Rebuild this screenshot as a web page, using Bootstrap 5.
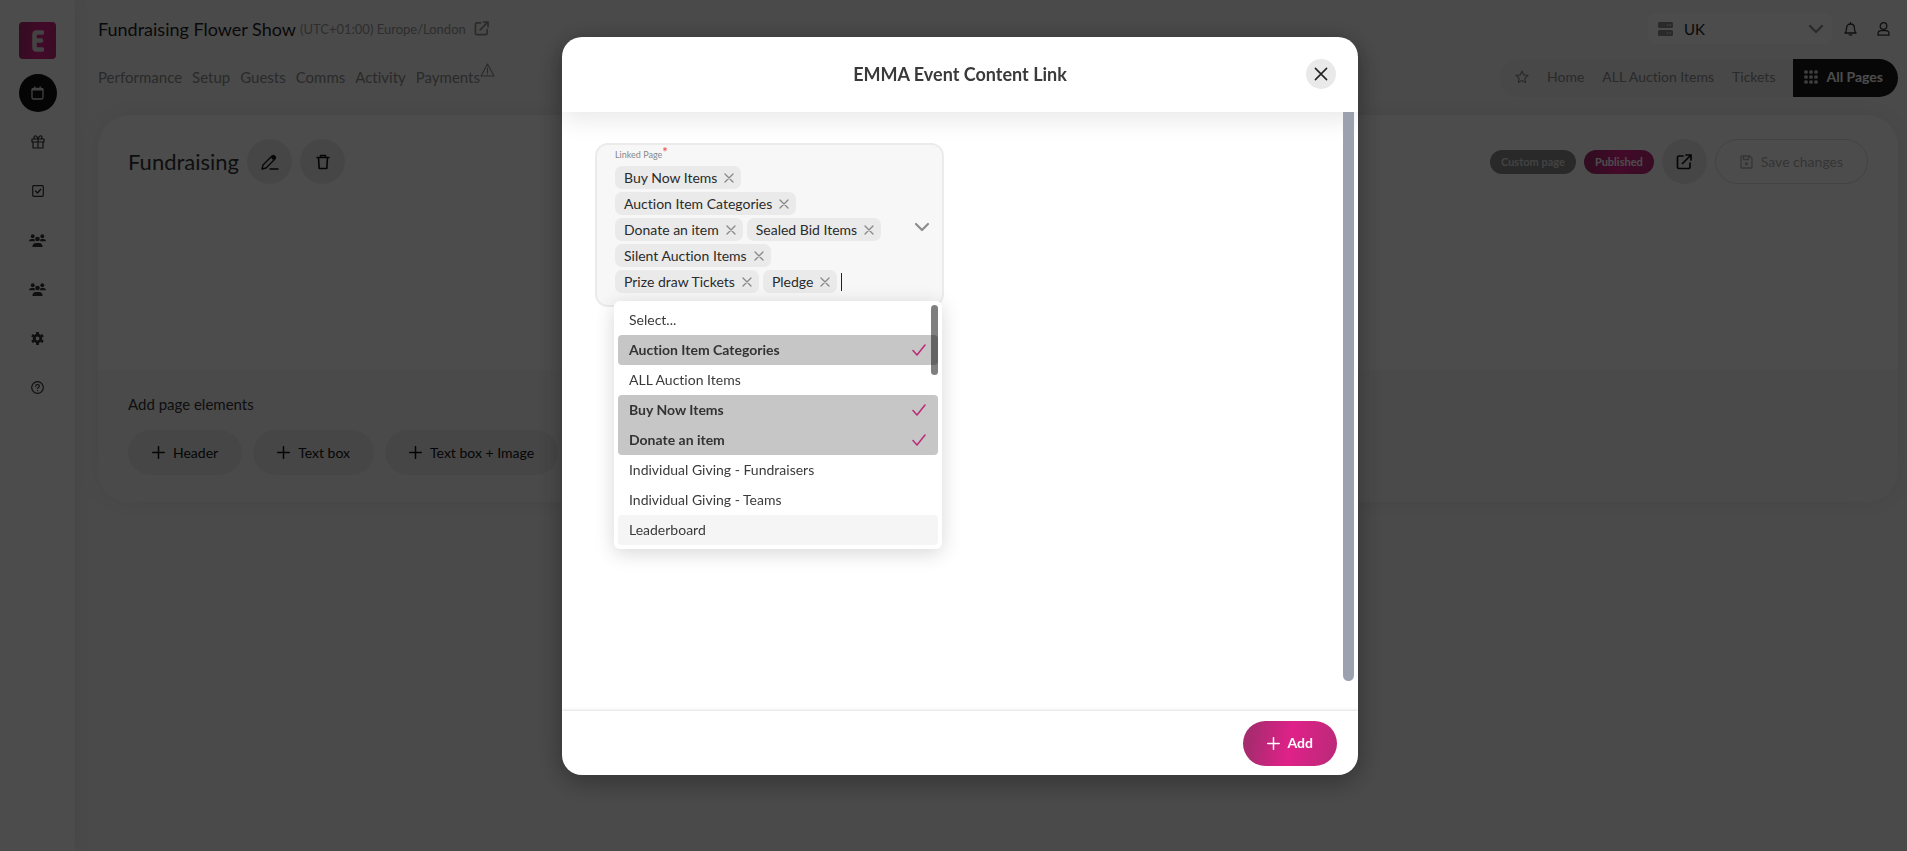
<!DOCTYPE html>
<html lang="en">
<head>
<meta charset="utf-8">
<meta name="viewport" content="width=device-width, initial-scale=1">
<title>Fundraising Flower Show</title>
<link href="https://cdn.jsdelivr.net/npm/bootstrap@5.3.0/dist/css/bootstrap.min.css" rel="stylesheet">
<style>
  body { font-family: Lato, "Liberation Sans", sans-serif; font-size: 15px; line-height: 20px; color: #333; background: #f8f8f8; overflow: hidden; font-variant-ligatures: none; }
  svg { display: block; fill: none; stroke: currentColor; stroke-linecap: round; stroke-linejoin: round; flex: none; }
  .solid { fill: currentColor; stroke: none; }
  a { color: inherit; text-decoration: none; }

  .side-rail { width: 75px; padding-top: 22px; gap: 11px; background: #fff; box-shadow: 4px 0 16px rgba(0,0,0,.06); }
  .brand-tile { width: 37px; height: 37px; border-radius: 4px; margin-bottom: 4px; background: linear-gradient(100deg, #a82b6f, #df2189 60%, #b92a78); color: #e2e2e2; }
  .rail-link { width: 38px; height: 38px; border-radius: 50%; }
  .rail-link.active { background: #111; color: #ddd; }
  .rail-version { font-size: 12px; color: #555; margin-bottom: -14px; }

  .workspace { padding: 13px 9px 0 23px; }
  .top-line { height: 31px; margin-bottom: 15px; }
  .event-name { font-size: 18px; color: #222; }
  .zone { font-size: 13px; color: #999; }
  .muted { color: #8c8c8c; }
  .region-box { width: 184px; height: 31px; border-radius: 8px; background: #fdfdfd; padding: 0 8px 0 10px; }
  .region-box select { appearance: none; border: 0; background: none; font-size: 15px; color: #222; width: 100%; padding: 0 0 0 11px; }
  .event-tabs { gap: 10px; padding-bottom: 2px; }
  .event-tabs sup { margin-top: -4px; }
  .page-tabs { height: 38px; border-radius: 19px; overflow: hidden; background: #f1f1f1; font-size: 14px; }
  .tab-list { padding: 0 18px 2px 15px; gap: 18px; }
  .all-pages { background: #1a1a1a; color: #fff; padding: 0 15px 2px 11px; gap: 8px; font-weight: 700; }

  .page-card { border-radius: 32px; background: #fff; margin-top: 18px; overflow: hidden; box-shadow: 0 0 24px rgba(0,0,0,.08); }
  .card-top { min-height: 255px; padding: 24px 30px 0 30px; }
  .card-bottom { background: #f9f9f9; min-height: 132px; padding: 24px 30px; }
  .page-name { font-size: 22px; line-height: 28px; }
  .pill-btn { height: 45px; border: 0; border-radius: 23px; background: #ebebeb; color: #111; font-size: 14px; }
  .round-btn { width: 45px; }
  .save-btn { border: 1px solid #ddd; background: #fff; color: #b0b0b0; padding: 0 24px; gap: 8px; }
  .tag-pill { border-radius: 13px; font-size: 11px; font-weight: 700; line-height: 24px; padding: 0 11px; color: #ddd; background: #8a8a8a; }
  .brand-fill { background: linear-gradient(100deg, #a82b6f 10%, #df2189 50%, #b92a78); color: #fff; }
  .add-btn { padding: 0 24px; gap: 8px; }

  .modal-backdrop.show { opacity: .7; }
  .link-modal { padding-left: 13px; }
  .link-dialog { max-width: 796px; margin: 37px auto 0; }
  .link-dialog .modal-content { height: calc(100vh - 113px); border: 0; border-radius: 20px; box-shadow: 0 6px 28px rgba(0,0,0,.35); }
  .link-dialog .modal-header { height: 75px; border: 0; padding: 0 22px 2px; box-shadow: 0 8px 24px rgba(0,0,0,.09); display: grid; grid-template-columns: 30px 1fr 30px; }
  .link-dialog .modal-title { font-size: 18px; font-weight: 700; line-height: 24px; color: #3a3a3a; }
  .close-btn { width: 30px; height: 30px; border: 0; border-radius: 50%; background: #e9e9e9; color: #222; }
  .link-dialog .modal-body { padding: 31px 4px 0 33px; position: static; font-size: 14px; }
  .bar-track { width: 11px; margin-top: -31px; }
  .bar-thumb { height: 95%; border-radius: 0 0 6px 6px; background: #9ba1ae; }
  .link-dialog .modal-footer { height: 64px; border: 0; padding: 0 21px; box-shadow: 0 -1px 3px rgba(0,0,0,.12); }
  .link-dialog .modal-footer > * { margin: 0; }

  .pick-box { width: 349px; height: 164px; border: 2px solid #ebebeb; border-radius: 13px; background: #f7f7f7; padding: 3px 12px 0 18px; position: relative; }
  .pick-label { display: block; height: 18px; font-size: 9px; line-height: 14px; color: #888; }
  .pick-label sup { font-size: 13px; line-height: 0; top: -1px; color: #f0433a; }
  .chips { width: 276px; gap: 3px 4px; }
  .chip-item { height: 23px; border-radius: 7px; background: #eaeaea; padding: 0 7px 0 9px; gap: 7px; color: #2b2b2b; }
  .chip-item button { border: 0; padding: 0; background: none; color: #888; }
  .chips input { width: 20px; height: 18px; border: 0; border-left: 1px solid #222; background: none; padding: 0; outline: 0; }
  .pick-menu { position: absolute; top: 156px; left: 17px; width: 328px; padding: 4px; border-radius: 6px; background: #fff; box-shadow: 0 4px 20px rgba(0,0,0,.16); z-index: 5; color: #3a3a3a; }
  .pick-option { height: 30px; padding: 0 12px 0 11px; border-radius: 4px; }
  .pick-option.chosen { background: #c6c6c6; font-weight: 700; color: #333; }
  .pick-option.chosen svg { color: #b92a78; }
  .pick-option.hovered { background: #f5f5f5; }
  .pick-option.joined-top { border-radius: 4px 4px 0 0; }
  .pick-option.joined-end { border-radius: 0 0 4px 4px; }
  .menu-thumb { position: absolute; top: 4px; right: 4px; width: 7px; height: 70px; border-radius: 4px; background: rgba(0,0,0,.5); }
</style>
</head>
<body>
<svg width="0" height="0" class="position-absolute" aria-hidden="true">
  <defs>
    <symbol id="plus" viewBox="0 0 13 13"><path d="M6.500 .7v11.600M.7 6.500h11.600" stroke-width="1.500"/></symbol>
    <symbol id="cross" viewBox="0 0 10 10"><path d="M1 1l8 8M9 1l-8 8"/></symbol>
    <symbol id="down" viewBox="0 0 16 10"><path d="M2 2l6 6 6-6" stroke-width="2.200"/></symbol>
    <symbol id="tick" viewBox="0 0 14 12"><path d="M1 6.500l4 4.500 8-10" stroke-width="1.500"/></symbol>
    <symbol id="outside" viewBox="0 0 16 16"><path d="M7 2H3a1.500 1.500 0 0 0-1.500 1.500v9.500A1.500 1.500 0 0 0 3 14.500h9.500A1.500 1.500 0 0 0 14 13V9M10 1h5v5M15 1L6.500 9.500" stroke-width="1.700"/></symbol>
    <symbol id="people" viewBox="0 0 16 12"><circle cx="3.500" cy="2" r="1.800"/><circle cx="12.500" cy="2" r="1.800"/><circle cx="8" cy="4.600" r="2.200"/><path d="M0 6.800c0-1.500 1-2.300 2.600-2.300h1.600c.5 0 .8.1 1 .2-.1 1 .2 1.700.6 2.100zM16 6.800c0-1.500-1-2.300-2.600-2.300h-1.600c-.5 0-.8.1-1 .2.1 1-.2 1.700-.6 2.100zM3.200 12c0-2.400 1.300-3.700 3.300-3.700h3c2 0 3.300 1.300 3.300 3.700z"/></symbol>
  </defs>
</svg>

<div class="d-flex vh-100">
  <nav class="side-rail d-flex flex-column align-items-center flex-shrink-0" aria-label="Main">
    <a href="#" class="brand-tile d-flex align-items-center justify-content-center" aria-label="EMMA"><svg width="12" height="22" viewBox="0 0 12 22"><path d="M10 2.500H4.500q-2 0-2 2v13q0 2 2 2H10M3 10.500h6" stroke-width="4.500"/></svg></a>
    <a href="#" class="rail-link active d-flex align-items-center justify-content-center" aria-label="Events"><svg width="13" height="14" viewBox="0 0 13 14" stroke-width="1.300"><rect x="1" y="2.500" width="11" height="10.500" rx="1.500"/><path d="M1.500 3.500h10" stroke-width="2"/><path d="M3.800.8v2M9.200.8v2"/></svg></a>
    <a href="#" class="rail-link d-flex align-items-center justify-content-center" aria-label="Gifts"><svg width="14" height="14" viewBox="0 0 14 14" stroke-width="1.200"><path d="M1 4h12v3H1zM2 7v6h10V7M7 4v9M7 4C6 0 3 0 3 2.400 3 3.600 4 4 5 4M7 4c1-4 4-4 4-1.600C11 3.600 10 4 9 4"/></svg></a>
    <a href="#" class="rail-link d-flex align-items-center justify-content-center" aria-label="Tasks"><svg width="12" height="12" viewBox="0 0 12 12" stroke-width="1.200"><rect x=".7" y=".7" width="10.600" height="10.600" rx="1"/><path d="M3.500 6l2 2 3.200-3.700" stroke-width="1.400"/></svg></a>
    <a href="#" class="rail-link d-flex align-items-center justify-content-center" aria-label="Guests"><svg class="solid" width="17" height="13"><use href="#people"/></svg></a>
    <a href="#" class="rail-link d-flex align-items-center justify-content-center" aria-label="Teams"><svg class="solid" width="17" height="13"><use href="#people"/></svg></a>
    <a href="#" class="rail-link d-flex align-items-center justify-content-center" aria-label="Settings"><svg width="13" height="13" viewBox="0 0 13 13"><circle cx="6.500" cy="6.500" r="3.300" stroke-width="2.800"/><path d="M6.500 0v2.200M6.500 10.800V13M.9 3.200l1.900 1.100M10.200 8.700l1.900 1.100M.9 9.800l1.900-1.100M10.200 4.300l1.900-1.100" stroke-width="2.800" stroke-linecap="butt"/></svg></a>
    <a href="#" class="rail-link d-flex align-items-center justify-content-center" aria-label="Help"><svg width="13" height="13" viewBox="0 0 13 13" stroke-width="1.200"><circle cx="6.500" cy="6.500" r="5.800"/><path d="M4.700 5.200c0-2.300 3.700-2.200 3.700-.1 0 1.300-1.800 1.300-1.800 2.300M6.600 9.500v.1"/></svg></a>
    <span class="rail-version mt-auto">3.2.7</span>
  </nav>

  <main class="workspace flex-grow-1">
    <div class="top-line d-flex align-items-center justify-content-between">
      <div class="d-flex align-items-center">
        <span class="event-name">Fundraising Flower Show</span>
        <span class="zone ms-1">(UTC+01:00) Europe/London</span>
        <a href="#" class="muted ms-2" aria-label="Open event"><svg width="15" height="15"><use href="#outside"/></svg></a>
      </div>
      <div class="d-flex align-items-center">
        <label class="region-box d-flex align-items-center">
          <svg class="solid muted" width="15" height="14" viewBox="0 0 15 14"><path d="M1.500 0h12A1.500 1.500 0 0 1 15 1.500v3A1.500 1.500 0 0 1 13.500 6h-12A1.500 1.500 0 0 1 0 4.500v-3A1.500 1.500 0 0 1 1.500 0zM1.500 8h12A1.500 1.500 0 0 1 15 9.500v3a1.500 1.500 0 0 1-1.500 1.500h-12A1.500 1.500 0 0 1 0 12.500v-3A1.500 1.500 0 0 1 1.500 8z"/><path d="M9 2.500h1.500v1H9zM11.500 2.500H13v1h-1.500zM9 10.500h1.500v1H9zM11.500 10.500H13v1h-1.500z" fill="#fff"/></svg>
          <select aria-label="Region"><option>UK</option></select>
          <svg class="muted" width="16" height="10"><use href="#down"/></svg>
        </label>
        <a href="#" class="ms-2 ps-1" aria-label="Notifications"><svg width="13" height="14" viewBox="0 0 13 14" stroke-width="1.300"><path d="M1 11c1.300-1.300 1.600-2.600 1.600-5 0-2.300 1.500-4 3.900-4s3.900 1.700 3.900 4c0 2.400.3 3.700 1.600 5zM6.500.6V2M5.300 12.900h2.400"/></svg></a>
        <a href="#" class="ms-3 ps-1 me-2" aria-label="Account"><svg width="13" height="14" viewBox="0 0 13 14" stroke-width="1.300"><circle cx="6.500" cy="4" r="3.300"/><path d="M1 13.200V12c0-2 1.300-3.300 3-3.300h5c1.700 0 3 1.300 3 3.300v1.200z"/></svg></a>
      </div>
    </div>

    <div class="d-flex align-items-center justify-content-between">
      <nav class="event-tabs d-flex muted" aria-label="Event">
        <a href="#">Performance</a><a href="#">Setup</a><a href="#">Guests</a><a href="#">Comms</a><a href="#">Activity</a>
        <a href="#" class="d-flex align-items-start">Payments<sup class="top-0"><svg width="15" height="14" viewBox="0 0 15 14" stroke-width="1.100"><path d="M7.500 1L14 13H1zM7.500 5v4.500M7.500 11.300v.1"/></svg></sup></a>
      </nav>
      <div class="page-tabs d-flex">
        <nav class="tab-list d-flex align-items-center muted" aria-label="Pages">
          <svg width="14" height="14" viewBox="0 0 14 14" stroke-width="1.200"><path d="M7 1l1.800 3.900 4.200.5-3.100 2.900.8 4.200L7 10.400l-3.700 2.100.8-4.200L1 5.400l4.200-.5z"/></svg>
          <a href="#">Home</a><a href="#">ALL Auction Items</a><a href="#">Tickets</a>
        </nav>
        <a href="#" class="all-pages d-flex align-items-center"><svg width="14" height="14" viewBox="0 0 14 14" stroke-width="1.200"><path d="M1 1h2v2H1zM6 1h2v2H6zM11 1h2v2h-2zM1 6h2v2H1zM6 6h2v2H6zM11 6h2v2h-2zM1 11h2v2H1zM6 11h2v2H6zM11 11h2v2h-2z"/></svg>All Pages</a>
      </div>
    </div>

    <section class="page-card">
      <div class="card-top d-flex align-items-start justify-content-between">
        <div class="d-flex align-items-center gap-2">
          <span class="page-name">Fundraising</span>
          <button class="pill-btn round-btn d-flex align-items-center justify-content-center" aria-label="Rename"><svg width="18" height="16" viewBox="0 0 18 16" stroke-width="1.400"><path d="M1 15l1-4L11 2l3 3-9 9-4 1zM9 15h8"/><path d="M11.500 3.500L12.500 2 14 3.500 12.500 4.500z" stroke-width="2.500"/></svg></button>
          <button class="pill-btn round-btn d-flex align-items-center justify-content-center" aria-label="Delete"><svg width="14" height="16" viewBox="0 0 14 16" stroke-width="1.600"><path d="M1 3.500h12M4.500 3.500v-2h5v2M2.500 3.500l.7 11h7.600l.7-11"/></svg></button>
        </div>
        <div class="d-flex align-items-center gap-2">
          <span class="tag-pill">Custom page</span>
          <span class="tag-pill brand-fill">Published</span>
          <a href="#" class="pill-btn round-btn d-flex align-items-center justify-content-center" aria-label="Open page"><svg width="16" height="16"><use href="#outside"/></svg></a>
          <button class="pill-btn save-btn d-flex align-items-center"><svg width="13" height="14" viewBox="0 0 13 14" stroke-width="1.300"><path d="M1 2q0-1 1-1h7.500L12 3.500V12q0 1-1 1H2q-1 0-1-1zM3.500 1v3.500h5V1"/><circle cx="6.500" cy="8.800" r="1"/></svg>Save changes</button>
        </div>
      </div>
      <div class="card-bottom">
        <div>Add page elements</div>
        <div class="d-flex mt-3" style="gap:11px">
          <button class="pill-btn add-btn d-flex align-items-center"><svg width="13" height="13"><use href="#plus"/></svg>Header</button>
          <button class="pill-btn add-btn d-flex align-items-center"><svg width="13" height="13"><use href="#plus"/></svg>Text box</button>
          <button class="pill-btn add-btn d-flex align-items-center"><svg width="13" height="13"><use href="#plus"/></svg>Text box + Image</button>
        </div>
      </div>
    </section>
  </main>
</div>

<div class="modal-backdrop show"></div>
<div class="modal link-modal d-block" role="dialog" aria-labelledby="dialogTitle">
  <div class="modal-dialog link-dialog">
    <div class="modal-content">
      <div class="modal-header align-items-center">
        <span></span>
        <h1 class="modal-title text-center" id="dialogTitle">EMMA Event Content Link</h1>
        <button class="close-btn d-flex align-items-center justify-content-center p-0" aria-label="Close"><svg width="14" height="14" stroke-width="1.100"><use href="#cross"/></svg></button>
      </div>
      <div class="modal-body d-flex justify-content-between">
        <div class="pick-box d-flex align-items-center justify-content-between">
          <div class="align-self-start">
            <label class="pick-label" for="pageSearch">Linked Page<sup>*</sup></label>
            <div class="chips d-flex flex-wrap align-items-center">
              <span class="w-100 d-flex"><span class="chip-item d-flex align-items-center">Buy Now Items<button aria-label="Remove Buy Now Items"><svg width="10" height="10" stroke-width="1.300"><use href="#cross"/></svg></button></span></span>
              <span class="w-100 d-flex"><span class="chip-item d-flex align-items-center">Auction Item Categories<button aria-label="Remove Auction Item Categories"><svg width="10" height="10" stroke-width="1.300"><use href="#cross"/></svg></button></span></span>
              <span class="chip-item d-flex align-items-center">Donate an item<button aria-label="Remove Donate an item"><svg width="10" height="10" stroke-width="1.300"><use href="#cross"/></svg></button></span>
              <span class="chip-item d-flex align-items-center">Sealed Bid Items<button aria-label="Remove Sealed Bid Items"><svg width="10" height="10" stroke-width="1.300"><use href="#cross"/></svg></button></span>
              <span class="chip-item d-flex align-items-center">Silent Auction Items<button aria-label="Remove Silent Auction Items"><svg width="10" height="10" stroke-width="1.300"><use href="#cross"/></svg></button></span>
              <span class="chip-item d-flex align-items-center">Prize draw Tickets<button aria-label="Remove Prize draw Tickets"><svg width="10" height="10" stroke-width="1.300"><use href="#cross"/></svg></button></span>
              <span class="chip-item d-flex align-items-center">Pledge<button aria-label="Remove Pledge"><svg width="10" height="10" stroke-width="1.300"><use href="#cross"/></svg></button></span>
              <input id="pageSearch" type="text">
            </div>
          </div>
          <svg class="muted" width="16" height="10"><use href="#down"/></svg>

          <div class="pick-menu" role="listbox" aria-label="Linked Page">
            <div class="pick-option d-flex align-items-center" role="option">Select...</div>
            <div class="pick-option chosen d-flex align-items-center justify-content-between" role="option">Auction Item Categories<svg width="14" height="12"><use href="#tick"/></svg></div>
            <div class="pick-option d-flex align-items-center" role="option">ALL Auction Items</div>
            <div class="pick-option chosen joined-top d-flex align-items-center justify-content-between" role="option">Buy Now Items<svg width="14" height="12"><use href="#tick"/></svg></div>
            <div class="pick-option chosen joined-end d-flex align-items-center justify-content-between" role="option">Donate an item<svg width="14" height="12"><use href="#tick"/></svg></div>
            <div class="pick-option d-flex align-items-center" role="option">Individual Giving - Fundraisers</div>
            <div class="pick-option d-flex align-items-center" role="option">Individual Giving - Teams</div>
            <div class="pick-option hovered d-flex align-items-center" role="option">Leaderboard</div>
            <div class="menu-thumb"></div>
          </div>
        </div>
        <div class="bar-track"><div class="bar-thumb"></div></div>
      </div>
      <div class="modal-footer justify-content-end">
        <button class="pill-btn brand-fill add-btn d-flex align-items-center fw-bold"><svg width="13" height="13"><use href="#plus"/></svg>Add</button>
      </div>
    </div>
  </div>
</div>
<script src="https://cdn.jsdelivr.net/npm/bootstrap@5.3.0/dist/js/bootstrap.bundle.min.js"></script>
</body>
</html>
